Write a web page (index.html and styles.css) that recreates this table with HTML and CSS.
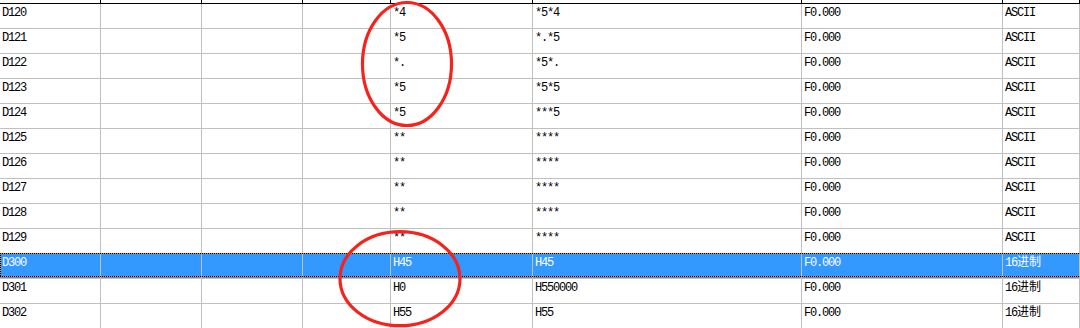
FILE: index.html
```html
<!DOCTYPE html>
<html>
<head>
<meta charset="utf-8">
<link rel="stylesheet" href="styles.css">
</head>
<body>
<div class="sheet">
  <div class="row head"><div></div><div></div><div></div><div></div><div></div><div></div><div></div><div></div></div>
  <div class="row"><div>D120</div><div></div><div></div><div></div><div>*4</div><div>*5*4</div><div>F0.000</div><div>ASCII</div></div>
  <div class="row"><div>D121</div><div></div><div></div><div></div><div>*5</div><div>*.*5</div><div>F0.000</div><div>ASCII</div></div>
  <div class="row"><div>D122</div><div></div><div></div><div></div><div>*.</div><div>*5*.</div><div>F0.000</div><div>ASCII</div></div>
  <div class="row"><div>D123</div><div></div><div></div><div></div><div>*5</div><div>*5*5</div><div>F0.000</div><div>ASCII</div></div>
  <div class="row"><div>D124</div><div></div><div></div><div></div><div>*5</div><div>***5</div><div>F0.000</div><div>ASCII</div></div>
  <div class="row"><div>D125</div><div></div><div></div><div></div><div>**</div><div>****</div><div>F0.000</div><div>ASCII</div></div>
  <div class="row"><div>D126</div><div></div><div></div><div></div><div>**</div><div>****</div><div>F0.000</div><div>ASCII</div></div>
  <div class="row"><div>D127</div><div></div><div></div><div></div><div>**</div><div>****</div><div>F0.000</div><div>ASCII</div></div>
  <div class="row"><div>D128</div><div></div><div></div><div></div><div>**</div><div>****</div><div>F0.000</div><div>ASCII</div></div>
  <div class="row"><div>D129</div><div></div><div></div><div></div><div>**</div><div>****</div><div>F0.000</div><div>ASCII</div></div>
  <div class="row sel"><div>D300</div><div></div><div></div><div></div><div>H45</div><div>H45</div><div>F0.000</div><div>16<span class="cjk">进制</span></div></div>
  <div class="row"><div>D301</div><div></div><div></div><div></div><div>H0</div><div>H550000</div><div>F0.000</div><div>16<span class="cjk">进制</span></div></div>
  <div class="row"><div>D302</div><div></div><div></div><div></div><div>H55</div><div>H55</div><div>F0.000</div><div>16<span class="cjk">进制</span></div></div>
  <svg class="marks" width="1080" height="328" viewBox="0 0 1080 328">
    <ellipse cx="407" cy="64" rx="44.5" ry="61.5" fill="none" stroke="#f5231c" stroke-width="3.2"/>
    <ellipse cx="400" cy="278.7" rx="60" ry="47" fill="none" stroke="#f5231c" stroke-width="3.2"/>
  </svg>
</div>
</body>
</html>
```
FILE: styles.css
```css
html, body {
  margin: 0;
  padding: 0;
  background: #fff;
  overflow: hidden;
}
.sheet {
  position: relative;
  width: 1080px;
  height: 328px;
  overflow: hidden;
  font-family: "Liberation Mono", "Noto Sans CJK SC", monospace;
  font-size: 12px;
  letter-spacing: -1.2px;
  color: #000;
}
.row {
  display: grid;
  grid-template-columns: 101px 101px 101px 88px 142px 269px 201px 1fr;
  height: 25px;
  box-sizing: border-box;
  border-bottom: 1px solid #c0c0c0;
}
.row > div {
  box-sizing: border-box;
  border-right: 1px solid #c0c0c0;
  padding: 3px 0 0 2px;
  line-height: 13px;
  white-space: nowrap;
}
.cjk {
  font-family: "Noto Sans CJK SC", sans-serif;
  letter-spacing: 0;
  font-size: 12px;
  line-height: 0;
}
.row.head {
  height: 4px;
  border-bottom: 1px solid #000;
}
.row.head > div {
  border-right-color: #000;
  padding: 0;
}
.row.sel {
  position: relative;
  background: #3399ff;
  color: #fff;
}
.row.sel::after {
  content: "";
  position: absolute;
  left: 0;
  right: 0;
  top: -1px;
  bottom: 1px;
  background:
    repeating-linear-gradient(90deg, #000 0 1px, #e8872c 1px 2px) top left / 100% 1px no-repeat,
    repeating-linear-gradient(90deg, #000 0 1px, #e8872c 1px 2px) bottom left / 100% 1px no-repeat,
    repeating-linear-gradient(180deg, #000 0 1px, #e8872c 1px 2px) top left / 1px 100% no-repeat;
}
.marks {
  position: absolute;
  left: 0;
  top: 0;
  pointer-events: none;
}
```
